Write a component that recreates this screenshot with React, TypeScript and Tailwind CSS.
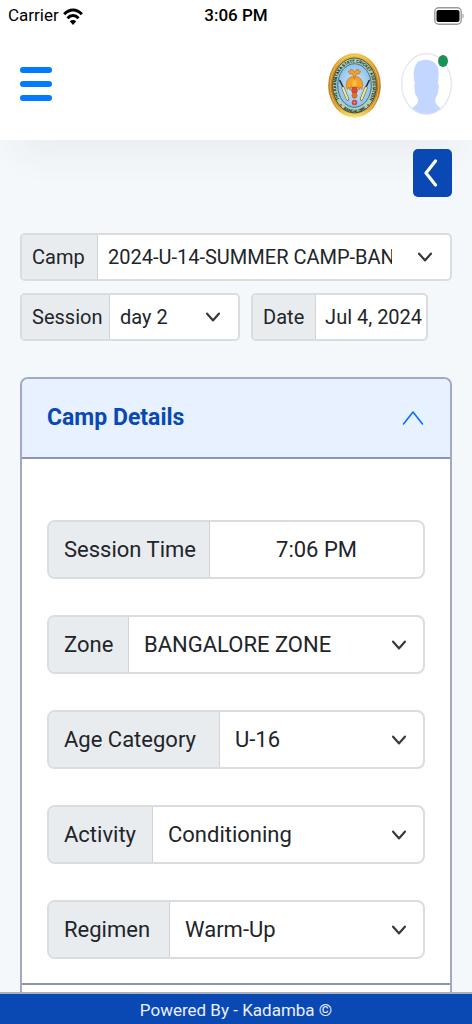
import React, { useId } from "react";

function Chevron({ className }: { className: string }) {
  return (
    <svg viewBox="0 0 16 16" className={className} fill="none" stroke="#343a40" strokeWidth="2" strokeLinecap="round" strokeLinejoin="round" preserveAspectRatio="none" aria-hidden="true">
      <path d="m2 5 6 6 6-6" />
    </svg>
  );
}

type FieldProps = {
  label: string;
  value: string;
  labelWidth: string;
  kind?: "select" | "input";
  size?: "sm" | "lg";
  className?: string;
  controlClass?: string;
};

function Field({ label, value, labelWidth, kind = "select", size = "lg", className = "", controlClass = "" }: FieldProps) {
  const id = useId();
  const small = size === "sm";
  const box = small ? "h-12 rounded-[5px] text-[20px]" : "h-[59px] rounded-lg text-[22px]";
  const pad = small ? "pl-[10px]" : "pl-[15px]";
  return (
    <div className={`flex min-w-0 overflow-hidden border-2 border-[#d8dde2] bg-white text-[#212529] ${box} ${className}`}>
      <label htmlFor={id} className={`flex shrink-0 items-center whitespace-nowrap border-r border-[#ced4da] bg-[#e9ecef] ${pad} ${labelWidth}`}>
        {label}
      </label>
      {kind === "select" ? (
        <div className="relative min-w-0 flex-1">
          <select id={id} className={`h-full w-full appearance-none bg-transparent outline-none ${small ? "pl-[10px] pr-[58px]" : "pl-[15px] pr-12"}`}>
            <option>{value}</option>
          </select>
          <Chevron className={`pointer-events-none absolute top-1/2 h-[18px] w-4 -translate-y-1/2 ${small ? "right-[17px]" : "right-4"}`} />
        </div>
      ) : (
        <input id={id} type="text" defaultValue={value} className={`w-full min-w-0 flex-1 bg-transparent outline-none ${controlClass}`} />
      )}
    </div>
  );
}

function StatusBar() {
  return (
    <div className="grid h-8 grid-cols-3 items-center px-2 text-[17px] text-black">
      <div className="flex items-center gap-1">
        <span>Carrier</span>
        <svg viewBox="0 0 20 17" className="h-[17px] w-5" fill="none" stroke="#000" strokeWidth="3" aria-label="Wi-Fi">
          <path d="M1.2 6.3C6.2.7 13.8.7 18.8 6.3" />
          <path d="M4.5 10.2c3.2-3.6 7.800-3.600 11 0" />
          <path d="M10 17 6.800 13.300c1.900-1.900 4.500-1.900 6.400 0z" fill="#000" stroke="none" />
        </svg>
      </div>
      <span className="text-center font-medium">3:06 PM</span>
      <svg viewBox="0 0 30 18" className="h-[18px] w-[30px] justify-self-end" aria-label="Battery full">
        <rect x="0.800" y="0.800" width="26.400" height="16.400" rx="4" fill="#fff" stroke="#9a9a9a" strokeWidth="1.400" />
        <rect x="2.500" y="3" width="23" height="12" rx="2" fill="#000" />
        <path d="M28.500 6.300c1.500.7 1.500 4.700 0 5.400z" fill="#9a9a9a" />
      </svg>
    </div>
  );
}

function Emblem() {
  return (
    <svg viewBox="0 0 53 65" className="h-[65px] w-[53px]" role="img" aria-label="The Karnataka State Cricket Association">
      <defs>
        <linearGradient id="gold" x1="0" y1="0" x2="0" y2="1">
          <stop offset="0" stopColor="#f2c84a" />
          <stop offset="0.200" stopColor="#d99a2e" />
          <stop offset="0.550" stopColor="#bd7417" />
          <stop offset="0.850" stopColor="#d9a032" />
          <stop offset="1" stopColor="#ffe873" />
        </linearGradient>
        <radialGradient id="sky">
          <stop offset="0" stopColor="#d8ecfb" />
          <stop offset="1" stopColor="#8fc2ec" />
        </radialGradient>
        <path id="ringTop" d="M13 49A18.300 23.600 0 1 1 40 49" />
        <path id="ringBottom" d="M13.500 54.200A21.500 26.500 0 0 0 39.500 54.200" />
      </defs>
      <ellipse cx="26.500" cy="32.500" rx="26.300" ry="32.300" fill="url(#gold)" />
      <ellipse cx="26.500" cy="32.500" rx="24.300" ry="30" fill="none" stroke="#f6d67a" strokeWidth="0.800" opacity="0.700" />
      <ellipse cx="26.500" cy="32.500" rx="21.800" ry="27.500" fill="#a9d3b8" stroke="#4a4a2a" strokeWidth="0.900" />
      <ellipse cx="26.500" cy="32.500" rx="16.800" ry="21.800" fill="url(#sky)" stroke="#39618c" strokeWidth="0.900" />
      <text fontSize="4.200" fontWeight="700" fill="#18221e" fontFamily="Roboto, sans-serif">
        <textPath href="#ringTop" startOffset="50%" textAnchor="middle">THE KARNATAKA STATE CRICKET ASSOCIATION</textPath>
      </text>
      <text fontSize="4.200" fontWeight="700" fill="#18221e" fontFamily="Roboto, sans-serif">
        <textPath href="#ringBottom" startOffset="50%" textAnchor="middle">BANGALORE</textPath>
      </text>
      <circle cx="13" cy="52" r="0.900" fill="#d3322c" />
      <circle cx="40" cy="52" r="0.900" fill="#d3322c" />
      <g strokeLinecap="round">
        <path d="M11.800 27.500 15 34M41.200 27.500 38 34" stroke="#252525" strokeWidth="1.500" />
        <path d="m15 35 4.500 11M38 35l-4.500 11" stroke="#5b5120" strokeWidth="3.200" />
        <path d="m15 35 4.500 11M38 35l-4.500 11" stroke="#f1e59e" strokeWidth="2.100" />
      </g>
      <g fill="#f1a329" stroke="#bf5d16" strokeWidth="0.600" strokeLinejoin="round">
        <path d="M26.500 24.500c-2.500-1.500-4-.5-6.300 1.500-2.300 3-2.300 6.500-.9 10.500l1.400-2.500 1.100 3 1.400-3.500 1.500 2.500h3.600l1.500-2.500 1.400 3.500 1.100-3 1.400 2.500c1.400-4 1.400-7.500-.9-10.500-2.300-2-3.800-3-6.300-1.500z" />
        <path d="m26.500 25.500-2-4.500-2.700-.2-1.500-2.300 2-.7.4-1.600 2.300.8 1.500 2.500 1.500-2.500 2.300-.8.4 1.600 2 .7-1.500 2.300-2.700.2z" />
      </g>
      <path d="M24.500 27.500h4l.3 6-2.300 2-2.300-2z" fill="#f7bd3e" />
      <path d="M24.500 34h4l1.200 3.500-1.200 2.500h-4l-1.200-2.500z" fill="#dd492c" stroke="#a83a1c" strokeWidth="0.500" />
      <ellipse cx="26.500" cy="42.500" rx="2.600" ry="2.800" fill="#e0702c" stroke="#b04a16" strokeWidth="0.500" />
      <circle cx="26.500" cy="49.500" r="2.500" fill="#d93d38" stroke="#9f2724" strokeWidth="0.500" />
      <path d="M24.500 49.500h4M26.500 47.500v4" stroke="#f4a08f" strokeWidth="0.500" />
    </svg>
  );
}

function Avatar() {
  return (
    <span className="relative block">
      <svg viewBox="0 0 51 62" className="h-[62px] w-[51px]" aria-hidden="true">
        <defs>
          <clipPath id="avatarClip">
            <ellipse cx="25.500" cy="31" rx="24.500" ry="30" />
          </clipPath>
        </defs>
        <ellipse cx="25.500" cy="31" rx="24.800" ry="30.300" fill="#fff" stroke="#e4e3ef" strokeWidth="1.200" />
        <path clipPath="url(#avatarClip)" fill="#c2d6ff" d="M14 31c-1-4-2-10-.7-15C14.500 10 18 7 22 7.200c5-1 9 .3 12 3 3.500 3.500 4 8 3.500 13l-.5 8.300c1.200-.2 1 2 .4 5-.5 4-1 7-2.300 7-.8 3-1 3.500-.8 5 .5 3 2.500 4 6.700 8V62H10v-6c4-3.500 6.500-4.500 7-7.500.2-1.500-.2-2-1-5-1.300 0-1.900-3-2.300-7-.5-3-.7-5.700.3-5.500z" />
      </svg>
      <span className="absolute right-1 top-[2px] h-3 w-[10px] rounded-[50%] bg-[#1a9155]" />
    </span>
  );
}

export default function App() {
  return (
    <div className="flex h-dvh flex-col overflow-hidden bg-[#f4f8fb] font-['Roboto','Noto_Sans',sans-serif]">
      <header className="relative z-10 bg-white shadow-[0_30px_40px_-20px_rgba(60,50,70,0.07)]">
        <StatusBar />
        <div className="flex h-[108px] items-start justify-between px-5 pt-[21px]">
          <button type="button" aria-label="Open menu" className="mt-[14px] flex w-8 flex-col gap-2">
            <span className="h-[6px] w-full rounded-full bg-[#007bff]" />
            <span className="h-[6px] w-full rounded-full bg-[#007bff]" />
            <span className="h-[6px] w-full rounded-full bg-[#007bff]" />
          </button>
          <div className="flex items-start gap-5">
            <Emblem />
            <button type="button" aria-label="Profile">
              <Avatar />
            </button>
          </div>
        </div>
      </header>

      <main className="min-h-0 flex-1 overflow-y-auto px-5 pt-[9px] [scrollbar-width:none]">
        <div className="relative z-20 flex justify-end">
          <button type="button" aria-label="Back" className="flex h-12 w-[39px] items-center justify-center rounded-[5px] bg-[#0a48b3] pr-1">
            <svg viewBox="0 0 14 28" className="h-7 w-[14px]" fill="none" stroke="#fff" strokeWidth="3.200" strokeLinecap="round" strokeLinejoin="round" aria-hidden="true">
              <path d="M11.500 2 2 14l9.500 12" />
            </svg>
          </button>
        </div>

        <div className="mt-9 flex flex-col gap-3">
          <Field size="sm" label="Camp" value="2024-U-14-SUMMER CAMP-BANGALORE" labelWidth="w-[76px]" />
          <div className="flex gap-[11px] pr-6">
            <Field size="sm" label="Session" value="day 2" labelWidth="w-[88px]" className="flex-[5]" />
            <Field size="sm" kind="input" label="Date" value="Jul 4, 2024" labelWidth="w-[63px]" className="flex-[4]" controlClass="pl-[9px]" />
          </div>
        </div>

        <section className="mt-9 overflow-hidden rounded-t-lg border-2 border-b-0 border-[#a3a8c4] bg-white">
          <h2>
            <button type="button" aria-expanded="true" className="flex h-20 w-full items-center justify-between border-b-2 border-[#8f93b5] bg-[#e7f1ff] px-[25px] text-[23px] font-bold text-[#0a48b3]">
              <span>Camp Details</span>
              <svg viewBox="0 0 24 16" className="h-4 w-6" fill="none" stroke="#0d6efd" strokeWidth="1.600" strokeLinecap="round" strokeLinejoin="round" aria-hidden="true">
                <path d="M2.500 14 12 2l9.500 12" />
              </svg>
            </button>
          </h2>
          <div className="flex flex-col gap-9 border-b-2 border-[#8f93b5] px-[25px] pb-6 pt-[61px]">
            <Field kind="input" label="Session Time" value="7:06 PM" labelWidth="w-[161px]" controlClass="text-center" />
            <Field label="Zone" value="BANGALORE ZONE" labelWidth="w-[80px]" />
            <Field label="Age Category" value="U-16" labelWidth="w-[171px]" />
            <Field label="Activity" value="Conditioning" labelWidth="w-[104px]" />
            <Field label="Regimen" value="Warm-Up" labelWidth="w-[121px]" />
          </div>
          <div className="h-20" />
        </section>
      </main>

      <footer className="flex h-8 shrink-0 items-center justify-center border-t-2 border-[#a9b2bf] bg-[#0a48b3] pt-1 text-[17px] text-[#e9f0fb]">
        Powered By - Kadamba ©
      </footer>
    </div>
  );
}
